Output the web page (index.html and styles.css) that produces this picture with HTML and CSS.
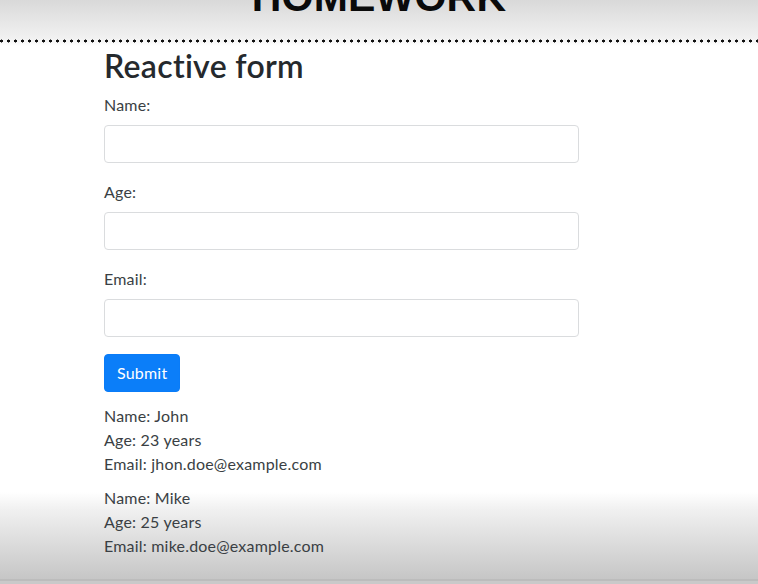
FILE: index.html
```html
<!DOCTYPE html>
<html lang="en">
<head>
<meta charset="utf-8">
<title>Reactive form</title>
<link rel="stylesheet" href="styles.css">
</head>
<body>
<header class="banner">
  <div class="banner-title">HOMEWORK</div>
</header>
<main class="content">
  <h2 class="title">Reactive form</h2>
  <form class="form">
    <div class="group">
      <label class="label">Name:</label>
      <input class="control" type="text">
    </div>
    <div class="group">
      <label class="label">Age:</label>
      <input class="control" type="text">
    </div>
    <div class="group">
      <label class="label">Email:</label>
      <input class="control" type="text">
    </div>
    <button class="btn" type="button">Submit</button>
  </form>
  <div class="results">
    <div class="person">
      <div class="line">Name: John</div>
      <div class="line">Age: 23 years</div>
      <div class="line">Email: jhon.doe@example.com</div>
    </div>
    <div class="person">
      <div class="line">Name: Mike</div>
      <div class="line">Age: 25 years</div>
      <div class="line">Email: mike.doe@example.com</div>
    </div>
  </div>
</main>
</body>
</html>
```

FILE: styles.css
```css
html {
  height: 584px;
  background:
    linear-gradient(to bottom, transparent 579px, #bcbcbc 579px, #bcbcbc 581px, #c9c9c9 581px),
    linear-gradient(to bottom, #d9d9d9 0px, #f1f1f1 38px, #ffffff 46px, #ffffff 492px, #f0f0f0 510px, #c6c6c6 579px);
  background-repeat: no-repeat;
}
body {
  margin: 0;
  height: 584px;
  overflow: hidden;
  font-family: Lato, "Open Sans", sans-serif;
  font-size: 16px;
  line-height: 24px;
  letter-spacing: 0.2px;
  color: #3a3f44;
}
.banner {
  height: 44px;
  overflow: hidden;
  display: flex;
  justify-content: center;
  background-image: radial-gradient(circle, #111 1.3px, transparent 1.8px);
  background-size: 7px 6px;
  background-position: -2px 38px;
  background-repeat: repeat-x;
}
.banner-title {
  font-family: "Liberation Sans", Arial, sans-serif;
  font-weight: bold;
  font-size: 41px;
  line-height: 41px;
  height: 41px;
  margin-top: -23px;
  color: #0a0a0a;
}
.content {
  padding-left: 104px;
  width: 475px;
  padding-top: 3px;
}
.title {
  margin: 0 0 8px 0;
  font-size: 32px;
  line-height: 38.4px;
  font-weight: 600;
  letter-spacing: 0.3px;
  color: #25292d;
}
.form {
  display: flex;
  flex-direction: column;
  align-items: flex-start;
}
.group {
  display: flex;
  flex-direction: column;
  width: 100%;
  margin-bottom: 17px;
}
.label {
  margin-bottom: 8px;
}
.control {
  box-sizing: border-box;
  width: 475px;
  height: 38px;
  border: 1px solid #dadcde;
  border-radius: 4px;
  background: #fff;
  margin: 0;
  font: inherit;
}
.btn {
  box-sizing: border-box;
  height: 38px;
  padding: 0 12px;
  border: 1px solid #0a7cf8;
  border-radius: 4px;
  background: #0b7ef9;
  color: #fff;
  font: inherit;
  letter-spacing: 0.2px;
}
.results {
  display: flex;
  flex-direction: column;
  gap: 10px;
  margin-top: 12px;
}
```
